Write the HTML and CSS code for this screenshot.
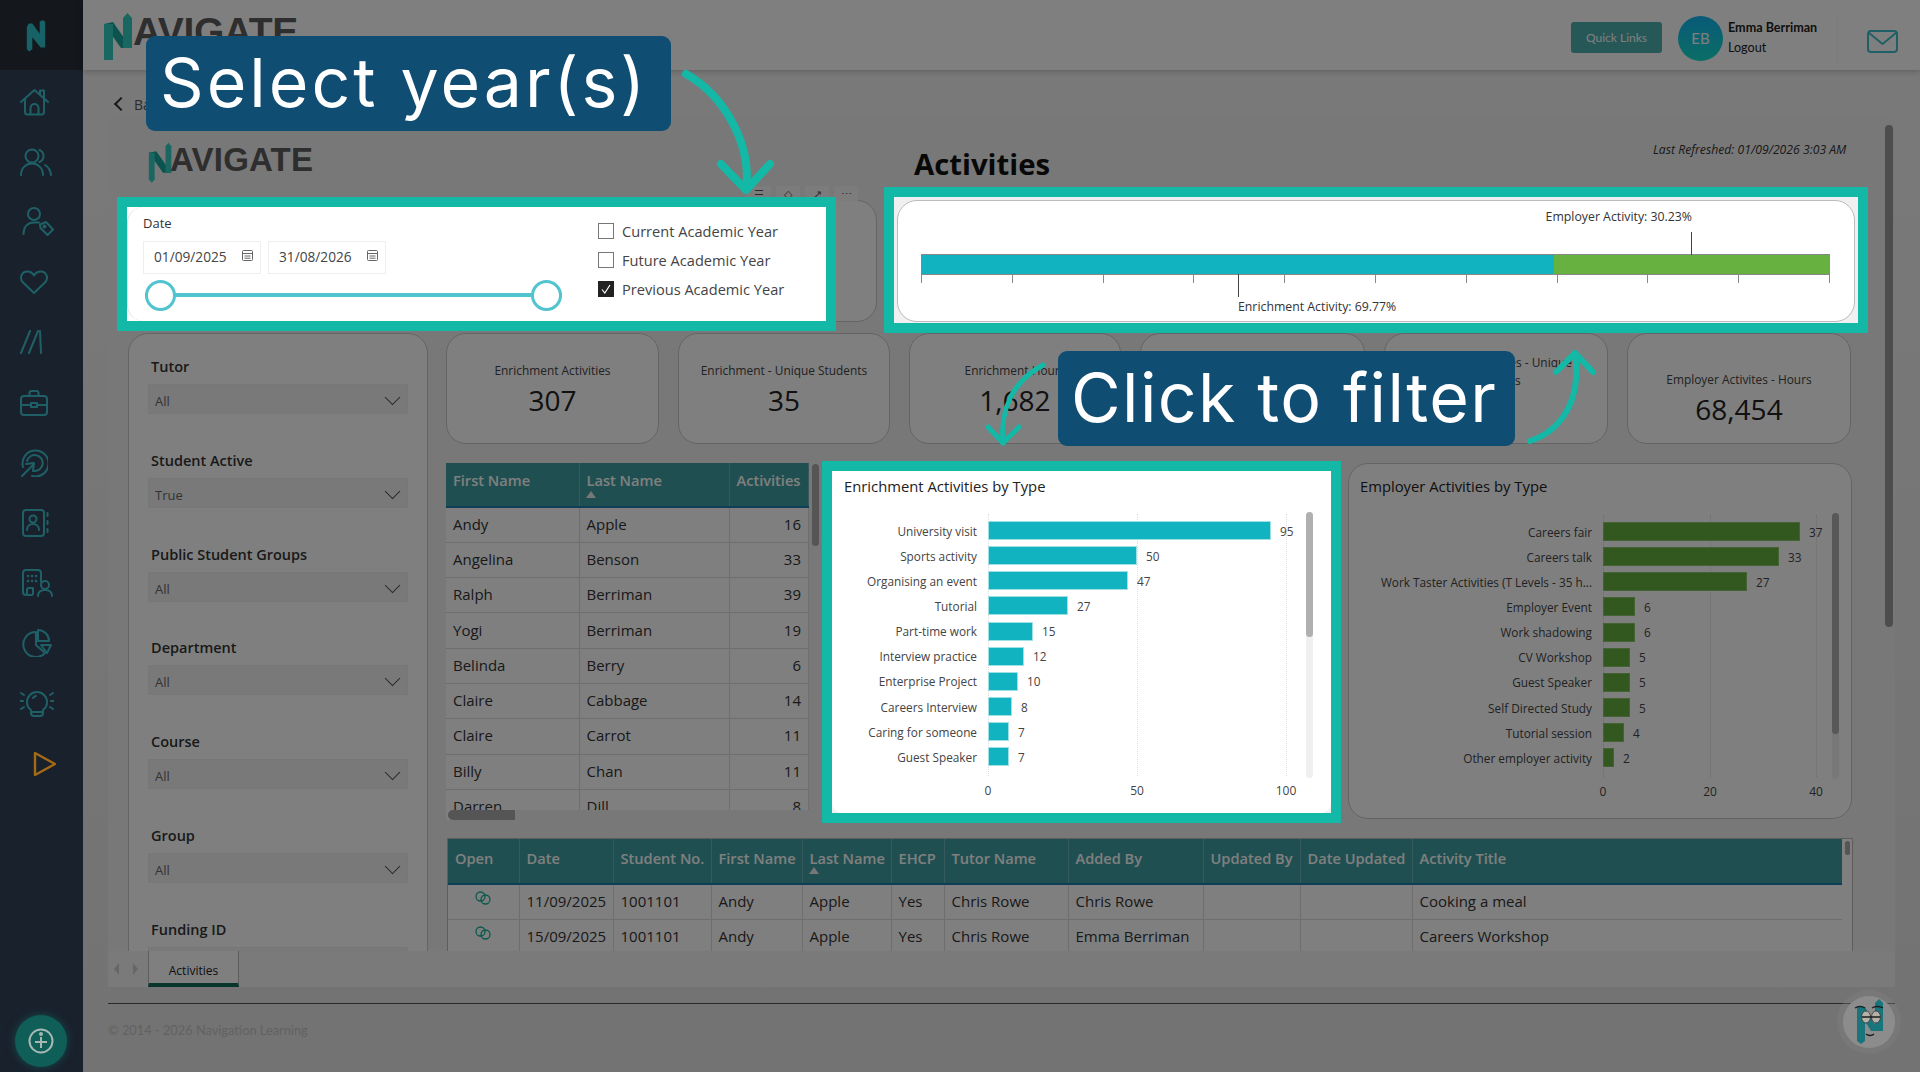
FILE: index.html
```html
<!DOCTYPE html>
<html lang="en">
<head>
    <meta charset="UTF-8" />
    <title>Navigate - Activities</title>
    <link rel="stylesheet" href="styles.css">
</head>
<body>
<aside class="sidebar">
    <div class="side-top">
        <svg class="side-logo" viewBox="0 0 24 36"><path d="M2 9 L2 33 L4.500 35.500 L8 33 L8 20 L17 31 L22 31 L22 3 L19 1 L16 3 L16 16 L8 5 L4 5 Z"/></svg>
    </div>
    <nav class="side-nav">
        <a class="nav-row"><svg width="29" height="28" viewBox="0 0 29 28"><path d="M1 14 14.500 2 28 14M5 11v13a2.500 2.500 0 0 0 2.500 2.500h14a2.500 2.500 0 0 0 2.500-2.500V11M10.500 26v-6a4 4 0 0 1 8 0v6M20 6V2.500h4V10"/></svg></a>
        <a class="nav-row"><svg width="32" height="28" viewBox="0 0 32 28"><circle cx="12" cy="8" r="6.500"/><path d="M1 27c0-7 5-11.500 11-11.500S23 20 23 27M19.500 2a6.500 6.500 0 0 1 0 12M25 17c3.500 2 5.500 5.500 6 10"/></svg></a>
        <a class="nav-row"><svg class="nudge" width="32" height="29" viewBox="0 0 32 29"><circle cx="12" cy="7" r="6"/><path d="M1.500 27c0-7 4-11.500 10.500-11.500h5M18 17.500l6-2.500 7 7.500-5.500 5.500-7-7z"/><circle cx="22.500" cy="19.500" r="1"/></svg></a>
        <a class="nav-row"><svg width="28" height="24" viewBox="0 0 28 24"><path d="M14 23 3 12.500C-1 8 1.500 1.500 7.500 1.500c3 0 5 1.500 6.500 4 1.500-2.500 3.500-4 6.500-4 6 0 8.500 6.500 4.500 11z"/></svg></a>
        <a class="nav-row"><svg width="22" height="24" viewBox="0 0 22 24"><path d="M1 23 10 1M9 23 18 1M20 1l1 22"/></svg></a>
        <a class="nav-row"><svg width="28" height="26" viewBox="0 0 28 26"><rect x="1" y="6" width="26" height="19" rx="3"/><path d="M9.500 6V3a2 2 0 0 1 2-2h5a2 2 0 0 1 2 2v3M1 15h10M17 15h10M11 13h6v4h-6z"/></svg></a>
        <a class="nav-row"><svg width="28" height="28" viewBox="0 0 28 28"><path d="M3 18A13 13 0 1 1 12 27M7 12a8 8 0 1 1 7 10"/><path d="M2 27 13 16M6 15l8-1-1 8"/></svg></a>
        <a class="nav-row"><svg class="nudge" width="27" height="28" viewBox="0 0 27 28"><rect x="1" y="1" width="21" height="26" rx="3"/><circle cx="11" cy="10" r="3.500"/><path d="M5 21c0-4 3-6 6-6s6 2 6 6M25.500 4v3M25.500 12v3M25.500 20v3"/></svg></a>
        <a class="nav-row"><svg class="nudge" width="32" height="29" viewBox="0 0 32 29"><path d="M10 26H4a3 3 0 0 1-3-3V4a3 3 0 0 1 3-3h12a3 3 0 0 1 3 3v9M5 25v-4a2 2 0 0 1 2-2h4v6"/><path d="M6 7h.1M10 7h.1M14 7h.1M6 12h.1M10 12h.1M14 12h.1" stroke-width="2.500"/><circle cx="23" cy="16" r="4"/><path d="M16 27c0-4 3-6 7-6s7 2 7 6"/></svg></a>
        <a class="nav-row"><svg class="nudge" width="30" height="28" viewBox="0 0 30 28"><path d="M14 3a12.500 12.500 0 1 0 9 21l-9-8z"/><path d="M16 1a11 11 0 0 1 11 11H16zM19 16h10l-4 8z"/></svg></a>
        <a class="nav-row"><svg width="34" height="27" viewBox="0 0 34 27"><path d="M11 20c-3-2-4-5-4-8a10 10 0 0 1 20 0c0 3-1 6-4 8v3a3 3 0 0 1-3 3h-6a3 3 0 0 1-3-3zM11 22h12M13 8a5 5 0 0 1 3-2M1 3l3 2M33 3l-3 2M0 11h3M31 11h3M1 19l3-2M33 19l-3-2"/></svg></a>
        <a class="nav-row nav-play"><svg width="24" height="26" viewBox="0 0 24 26"><path d="M2 2l20 11L2 24z"/></svg></a>
    </nav>
    <button class="help-btn" aria-label="Help"><svg width="26" height="26" viewBox="0 0 26 26"><circle cx="13" cy="13" r="11.500"/><path d="M7 14h12M13 9v11"/><circle cx="13" cy="6" r="1"/></svg></button>
</aside>

<div class="main">
    <header class="topbar">
        <div class="brand brand-big">
            <svg viewBox="0 0 30 50"><path class="n-dark" d="M1 14 L18 38 L28 38 L10 12 Z"/><path class="n-teal" d="M1 14 L10 14 L10 56 L5.500 60 L1 56 Z"/><path class="n-teal" d="M20 8 L24.500 3 L29 8 L29 38 L20 38 Z"/></svg>
            <span>AVIGATE</span>
        </div>
        <div class="top-right">
            <a class="quick-links">Quick Links</a>
            <div class="avatar">EB</div>
            <div class="user-info">
                <b>Emma Berriman</b>
                <span>Logout</span>
            </div>
            <svg class="mail-icon" width="31" height="23" viewBox="0 0 31 23"><rect x="1" y="1" width="29" height="21" rx="3"/><path d="M1.500 2.500 15.500 14 29.500 2.500"/></svg>
        </div>
    </header>

    <div class="back-row"><span class="back-chevron"></span>Back</div>

    <div class="report">
        <div class="report-head">
            <div class="brand brand-small">
                <svg viewBox="0 0 30 50"><path class="n-dark" d="M1 14 L18 38 L28 38 L10 12 Z"/><path class="n-teal" d="M1 14 L8 14 L8 46 L4.500 50 L1 46 Z"/><path class="n-teal" d="M21 6 L24.500 2 L28 6 L28 38 L21 38 Z"/></svg>
                <span>AVIGATE</span>
            </div>
            <h1 class="report-title">Activities</h1>
            <div class="refreshed">Last Refreshed: 01/09/2026 3:03 AM</div>
        </div>

        <div class="top-row">
            <div class="card slicer-card">
                <div class="visual-head"><i>&#9776;</i><i>&#9671;</i><i>&#8599;</i><i>&#8943;</i></div>
                <div class="slicer-spot">
                    <div class="slicer-in">
                        <div class="date-side">
                            <div class="date-title">Date</div>
                            <div class="date-inputs">
                                <div class="date-box">01/09/2025<svg class="cal" width="11" height="11" viewBox="0 0 11 11"><rect x=".5" y=".5" width="10" height="10" rx="1"/><path d="M.5 3.500h10M2.500 6h6M2.500 8.200h6"/></svg></div>
                                <div class="date-box">31/08/2026<svg class="cal" width="11" height="11" viewBox="0 0 11 11"><rect x=".5" y=".5" width="10" height="10" rx="1"/><path d="M.5 3.500h10M2.500 6h6M2.500 8.200h6"/></svg></div>
                            </div>
                            <div class="slider"><span class="knob"></span><span class="knob"></span></div>
                        </div>
                        <ul class="year-list">
                            <li><span class="check"></span>Current Academic Year</li>
                            <li><span class="check"></span>Future Academic Year</li>
                            <li><span class="check checked"><svg width="10" height="10" viewBox="0 0 10 10"><path d="M1 5.500 3.800 9 9 1"/></svg></span>Previous Academic Year</li>
                        </ul>
                    </div>
                </div>
            </div>

            <div class="gauge-spot">
                <div class="gauge">
                    <div class="gauge-bar">
                        <div class="seg-enrich"></div>
                        <div class="seg-employer"></div>
                        <div class="callout-up">Employer Activity: 30.23%</div>
                        <div class="callout-down">Enrichment Activity: 69.77%</div>
                    </div>
                    <div class="ticks"><i></i><i></i><i></i><i></i><i></i><i></i><i></i><i></i><i></i><i></i><i></i></div>
                </div>
            </div>
        </div>

        <div class="body-row">
            <section class="card filters">
                <div class="field"><label>Tutor</label><div class="drop">All</div></div>
                <div class="field"><label>Student Active</label><div class="drop">True</div></div>
                <div class="field"><label>Public Student Groups</label><div class="drop">All</div></div>
                <div class="field"><label>Department</label><div class="drop">All</div></div>
                <div class="field"><label>Course</label><div class="drop">All</div></div>
                <div class="field"><label>Group</label><div class="drop">All</div></div>
                <div class="field"><label>Funding ID</label><div class="drop"></div></div>
            </section>

            <div class="right-col">
                <div class="kpi-row">
                    <div class="card kpi"><div class="kpi-label">Enrichment Activities</div><div class="kpi-value">307</div></div>
                    <div class="card kpi"><div class="kpi-label">Enrichment - Unique Students</div><div class="kpi-value">35</div></div>
                    <div class="card kpi"><div class="kpi-label">Enrichment Hours</div><div class="kpi-value">1,682</div></div>
                    <div class="card kpi kpi-low"><div class="kpi-label">Employer Activities</div><div class="kpi-value">146</div></div>
                    <div class="card kpi kpi-two"><div class="kpi-label">Employer Activites - Unique Students</div><div class="kpi-value">28</div></div>
                    <div class="card kpi kpi-low"><div class="kpi-label">Employer Activites - Hours</div><div class="kpi-value">68,454</div></div>
                </div>

                <div class="mid-row">
                    <div class="students-wrap">
                        <table class="grid students">
                            <thead>
                                <tr><th class="c-first">First Name</th><th class="c-last sorted">Last Name</th><th class="c-act">Activities</th></tr>
                            </thead>
                            <tbody>
                                <tr><td>Andy</td><td>Apple</td><td class="num">16</td></tr>
                                <tr><td>Angelina</td><td>Benson</td><td class="num">33</td></tr>
                                <tr><td>Ralph</td><td>Berriman</td><td class="num">39</td></tr>
                                <tr><td>Yogi</td><td>Berriman</td><td class="num">19</td></tr>
                                <tr><td>Belinda</td><td>Berry</td><td class="num">6</td></tr>
                                <tr><td>Claire</td><td>Cabbage</td><td class="num">14</td></tr>
                                <tr><td>Claire</td><td>Carrot</td><td class="num">11</td></tr>
                                <tr><td>Billy</td><td>Chan</td><td class="num">11</td></tr>
                                <tr><td>Darren</td><td>Dill</td><td class="num">8</td></tr>
                            </tbody>
                        </table>
                        <div class="vscroll"></div>
                        <div class="hscroll"></div>
                    </div>

                    <section class="chart-spot">
                        <div class="chart chart-enrich">
                            <h2 class="chart-title">Enrichment Activities by Type</h2>
                            <div class="plot">
                                <div class="hbar"><span class="hlabel">University visit</span><span class="hfill" style="width:283px"></span><span class="hval">95</span></div>
                                <div class="hbar"><span class="hlabel">Sports activity</span><span class="hfill" style="width:149px"></span><span class="hval">50</span></div>
                                <div class="hbar"><span class="hlabel">Organising an event</span><span class="hfill" style="width:140px"></span><span class="hval">47</span></div>
                                <div class="hbar"><span class="hlabel">Tutorial</span><span class="hfill" style="width:80px"></span><span class="hval">27</span></div>
                                <div class="hbar"><span class="hlabel">Part-time work</span><span class="hfill" style="width:45px"></span><span class="hval">15</span></div>
                                <div class="hbar"><span class="hlabel">Interview practice</span><span class="hfill" style="width:36px"></span><span class="hval">12</span></div>
                                <div class="hbar"><span class="hlabel">Enterprise Project</span><span class="hfill" style="width:30px"></span><span class="hval">10</span></div>
                                <div class="hbar"><span class="hlabel">Careers Interview</span><span class="hfill" style="width:24px"></span><span class="hval">8</span></div>
                                <div class="hbar"><span class="hlabel">Caring for someone</span><span class="hfill" style="width:21px"></span><span class="hval">7</span></div>
                                <div class="hbar"><span class="hlabel">Guest Speaker</span><span class="hfill" style="width:21px"></span><span class="hval">7</span></div>
                                <i class="gridline" style="left:0"></i><i class="gridline" style="left:149px"></i><i class="gridline" style="left:298px"></i>
                                <div class="axis"><span style="left:0">0</span><span style="left:149px">50</span><span style="left:298px">100</span></div>
                            </div>
                            <div class="chart-scroll"><span class="thumb-light"></span></div>
                        </div>
                    </section>

                    <section class="card chart chart-employer">
                        <h2 class="chart-title">Employer Activities by Type</h2>
                        <div class="plot">
                            <div class="hbar"><span class="hlabel">Careers fair</span><span class="hfill" style="width:197px"></span><span class="hval">37</span></div>
                            <div class="hbar"><span class="hlabel">Careers talk</span><span class="hfill" style="width:176px"></span><span class="hval">33</span></div>
                            <div class="hbar"><span class="hlabel">Work Taster Activities (T Levels - 35 h...</span><span class="hfill" style="width:144px"></span><span class="hval">27</span></div>
                            <div class="hbar"><span class="hlabel">Employer Event</span><span class="hfill" style="width:32px"></span><span class="hval">6</span></div>
                            <div class="hbar"><span class="hlabel">Work shadowing</span><span class="hfill" style="width:32px"></span><span class="hval">6</span></div>
                            <div class="hbar"><span class="hlabel">CV Workshop</span><span class="hfill" style="width:27px"></span><span class="hval">5</span></div>
                            <div class="hbar"><span class="hlabel">Guest Speaker</span><span class="hfill" style="width:27px"></span><span class="hval">5</span></div>
                            <div class="hbar"><span class="hlabel">Self Directed Study</span><span class="hfill" style="width:27px"></span><span class="hval">5</span></div>
                            <div class="hbar"><span class="hlabel">Tutorial session</span><span class="hfill" style="width:21px"></span><span class="hval">4</span></div>
                            <div class="hbar"><span class="hlabel">Other employer activity</span><span class="hfill" style="width:11px"></span><span class="hval">2</span></div>
                            <i class="gridline" style="left:0"></i><i class="gridline" style="left:107px"></i><i class="gridline" style="left:213px"></i>
                            <div class="axis"><span style="left:0">0</span><span style="left:107px">20</span><span style="left:213px">40</span></div>
                        </div>
                        <div class="chart-scroll"><span class="thumb-dark"></span></div>
                    </section>
                </div>

                <div class="detail-wrap">
                    <table class="grid detail">
                        <thead>
                            <tr>
                                <th style="width:71px">Open</th>
                                <th style="width:94px">Date</th>
                                <th style="width:98px">Student No.</th>
                                <th style="width:91px">First Name</th>
                                <th class="sorted" style="width:89px">Last Name</th>
                                <th style="width:53px">EHCP</th>
                                <th style="width:124px">Tutor Name</th>
                                <th style="width:135px">Added By</th>
                                <th style="width:97px">Updated By</th>
                                <th style="width:112px">Date Updated</th>
                                <th>Activity Title</th>
                            </tr>
                        </thead>
                        <tbody>
                            <tr>
                                <td class="open"><svg width="18" height="14" viewBox="0 0 18 14"><circle cx="6.500" cy="5.500" r="4.500"/><circle cx="11.500" cy="8.500" r="4.500"/></svg></td>
                                <td>11/09/2025</td><td>1001101</td><td>Andy</td><td>Apple</td><td>Yes</td><td>Chris Rowe</td><td>Chris Rowe</td><td></td><td></td><td>Cooking a meal</td>
                            </tr>
                            <tr>
                                <td class="open"><svg width="18" height="14" viewBox="0 0 18 14"><circle cx="6.500" cy="5.500" r="4.500"/><circle cx="11.500" cy="8.500" r="4.500"/></svg></td>
                                <td>15/09/2025</td><td>1001101</td><td>Andy</td><td>Apple</td><td>Yes</td><td>Chris Rowe</td><td>Emma Berriman</td><td></td><td></td><td>Careers Workshop</td>
                            </tr>
                        </tbody>
                    </table>
                    <div class="detail-thumb"></div>
                </div>
            </div>
        </div>
        <div class="report-scroll"></div>
    </div>

    <div class="tabs">
        <div class="tab-arrows"><i class="arrow-l"></i><i class="arrow-r"></i></div>
        <div class="tab">Activities</div>
    </div>

    <footer class="footer">&copy; 2014 - 2026 Navigation Learning</footer>
</div>

<div class="dim"></div>

<div class="tour">
    <div class="tour-label label-year">Select year(s)</div>
    <div class="tour-label label-filter">Click to filter</div>
    <svg class="tour-arrows" width="1920" height="1072" viewBox="0 0 1920 1072">
        <path class="a-big" d="M686 74C725 96 752 145 746 190M721 164 746 190 770 164"/>
        <path class="a-small" d="M1043 365C1012 382 1000 410 1003 443M988 427 1003 443 1019 427"/>
        <path class="a-mid" d="M1530 441C1560 431 1582 402 1575 353M1556 372 1575 353 1593 372"/>
    </svg>
</div>

<div class="helper">
    <svg width="36" height="46" viewBox="0 0 36 46">
        <path class="helper-p" d="M6 8h8v34l-4 3-4-3zM14 8l10 18V4l4-4 4 4v28H20L14 22z"/>
        <ellipse class="helper-eye" cx="15" cy="18" rx="4.500" ry="6"/><ellipse class="helper-eye" cx="25" cy="18" rx="4.500" ry="6"/>
        <path class="helper-line" d="M4 9c3-2 7-2 10 0M21 9c3-2 8-2 11 0M11 18h18M15 35c2 2 6 2 8 0"/>
    </svg>
</div>
</body>
</html>
```
FILE: styles.css
```css
* {
    margin: 0;
    padding: 0;
    box-sizing: border-box;
}
html, body {
    height: 100%;
    overflow: hidden;
}
body {
    display: flex;
    font-family: "Open Sans", "Liberation Sans", sans-serif;
    color: #333;
    background: #eee;
}
svg {
    display: block;
}

/* sidebar */
.sidebar {
    width: 83px;
    flex: none;
    height: 1072px;
    background: #32425a;
}
.side-top {
    height: 70px;
    background: #28303a;
    padding: 18px 0 0 25px;
}
.side-logo {
    width: 22px;
    height: 35px;
    fill: #2cc4cc;
}
.side-nav {
    display: grid;
    grid-auto-rows: 60.2px;
    padding-top: 1.5px;
}
.nav-row {
    display: flex;
    align-items: center;
    padding-left: 20px;
}
.nav-row svg {
    fill: none;
    stroke: #3ec0cc;
    stroke-width: 2;
    stroke-linecap: round;
    stroke-linejoin: round;
}
.nav-row svg.nudge {
    margin-left: 2px;
}
.nav-play {
    padding-left: 33px;
    position: relative;
    z-index: 25;
}
.nav-play svg {
    stroke: #a66a14;
    stroke-width: 2.4;
}
.help-btn {
    position: absolute;
    left: 15px;
    top: 1015px;
    width: 52px;
    height: 52px;
    z-index: 25;
    border: 0;
    border-radius: 50%;
    background: #0f5e57;
    box-shadow: 0 0 10px rgba(20, 120, 110, .5);
    display: flex;
    align-items: center;
    justify-content: center;
}
.help-btn svg {
    fill: none;
    stroke: #a5b8b4;
    stroke-width: 2;
}

/* top bar */
.main {
    flex: 1;
    min-width: 0;
    display: flex;
    flex-direction: column;
    height: 1072px;
    background: linear-gradient(#f4f4f4, #e6e6e6);
}
.topbar {
    height: 70px;
    flex: none;
    background: #fff;
    box-shadow: 0 1px 6px rgba(0, 0, 0, .25);
    display: flex;
    align-items: flex-start;
    justify-content: space-between;
    padding-left: 20px;
    font-family: Lato, "Open Sans", sans-serif;
}
.brand {
    display: flex;
    align-items: flex-start;
    font-family: "Liberation Sans", sans-serif;
    font-weight: bold;
    color: #5c5c5c;
}
.n-teal {
    fill: #35cfc4;
}
.n-dark {
    fill: #17a79d;
}
.brand-big {
    padding-top: 10px;
}
.brand-big svg {
    width: 30px;
    height: 50px;
    overflow: hidden;
}
.brand-big span {
    font-size: 39px;
    letter-spacing: -.4px;
    line-height: 34px;
    margin-top: 5px;
}
.brand-small {
    width: 806px;
    padding: 23px 0 0 40px;
}
.brand-small svg {
    width: 25px;
    height: 42px;
}
.brand-small span {
    font-size: 33px;
    letter-spacing: .2px;
    line-height: 30px;
    margin: 4px 0 0 -3px;
}
.top-right {
    display: flex;
    align-items: center;
    height: 60px;
}
.quick-links {
    width: 91px;
    height: 31px;
    margin-top: 15px;
    border-radius: 3px;
    background: #4fb0b0;
    color: #fff;
    font-size: 12px;
    display: flex;
    align-items: center;
    justify-content: center;
}
.avatar {
    width: 45px;
    height: 45px;
    margin: 16px 0 0 16px;
    border-radius: 50%;
    background: linear-gradient(#12b4f0, #16dccb);
    color: #fff;
    font-size: 15px;
    display: flex;
    align-items: center;
    justify-content: center;
}
.user-info {
    width: 110px;
    margin: 16px 0 0 5px;
    font-size: 12.6px;
    line-height: 20px;
    color: #222;
    border-right: 1px solid #f6f6f6;
    height: 50px;
    padding-top: 5px;
}
.user-info b,
.user-info span {
    display: block;
}
.mail-icon {
    margin: 22px 22px 0 29px;
    fill: none;
    stroke: #3ec0cc;
    stroke-width: 2;
    stroke-linejoin: round;
}
.back-row {
    height: 48px;
    flex: none;
    padding: 20px 0 0 33px;
    font-size: 14px;
    color: #555;
    display: flex;
    align-items: center;
    gap: 8px;
}
.back-chevron {
    width: 10px;
    height: 10px;
    border-left: 2px solid #333;
    border-bottom: 2px solid #333;
    transform: rotate(45deg);
}

/* report canvas */
.report {
    position: relative;
    height: 833px;
    flex: none;
    margin: 0 25px;
    overflow: hidden;
    background: #f0f0f0;
}
.report-head {
    height: 82px;
    display: flex;
}
.report-title {
    font-size: 29.3px;
    font-weight: bold;
    color: #111;
    line-height: 40px;
    margin-top: 26px;
    width: 739px;
}
.refreshed {
    font-size: 12.2px;
    font-style: italic;
    color: #333;
    margin-top: 23px;
    white-space: nowrap;
}
.card {
    background: #fff;
    border: 1px solid #c8c8c8;
    border-radius: 20px;
}
.top-row {
    display: grid;
    grid-template-columns: 749px 957px;
    column-gap: 20px;
    margin-left: 20px;
    height: 133px;
}
.slicer-card {
    position: relative;
    height: 122px;
}
.visual-head {
    position: absolute;
    left: 618px;
    top: -15px;
    display: flex;
    gap: 5px;
}
.visual-head i {
    width: 24px;
    height: 15px;
    background: #f8f8f8;
    font-style: normal;
    font-size: 11px;
    line-height: 15px;
    text-align: center;
    color: #555;
}
.slicer-spot {
    position: absolute;
    left: -12px;
    top: -4px;
    width: 719px;
    height: 134px;
    z-index: 20;
    background: #fff;
    border: 10px solid #14b8a6;
}
.slicer-in {
    height: 100%;
    border-left: 1px solid #ddd;
    border-radius: 16px 0 0 16px;
    display: flex;
    padding-left: 15px;
}
.date-side {
    width: 455px;
}
.date-title {
    font-size: 13px;
    line-height: 18px;
    margin-top: 7px;
}
.date-inputs {
    display: flex;
    gap: 7px;
    margin-top: 9px;
}
.date-box {
    width: 118px;
    height: 33px;
    border: 1px solid #eee;
    font-size: 13.7px;
    color: #444;
    display: flex;
    align-items: center;
    justify-content: space-between;
    padding: 0 7px 3px 10px;
}
.cal {
    fill: none;
    stroke: #666;
    stroke-width: 1;
    margin-top: -2px;
}
.slider {
    position: relative;
    display: flex;
    justify-content: space-between;
    align-items: center;
    width: 417px;
    height: 30px;
    margin: 6px 0 0 2px;
    background: linear-gradient(#52c4cf, #52c4cf) center / 100% 4px no-repeat;
}
.knob {
    width: 31px;
    height: 31px;
    border-radius: 50%;
    background: #fff;
    border: 3px solid #52c4cf;
}
.year-list {
    list-style: none;
    padding-top: 9px;
}
.year-list li {
    height: 29px;
    display: flex;
    align-items: center;
    gap: 8px;
    font-size: 14.6px;
    color: #444;
    white-space: nowrap;
}
.check {
    width: 16px;
    height: 16px;
    border: 1px solid #777;
    display: flex;
    align-items: center;
    justify-content: center;
}
.checked {
    background: #222;
    border-color: #222;
}
.checked svg {
    fill: none;
    stroke: #fff;
    stroke-width: 1.200;
}

/* gauge */
.gauge-spot {
    position: relative;
    z-index: 20;
    height: 146px;
    margin: -13px -14px 0 -13px;
    border: 10px solid #14b8a6;
    background: #f0f0f0;
    padding: 3px;
}
.gauge {
    height: 122px;
    background: #fff;
    border: 1px solid #bbb;
    border-radius: 20px;
    padding: 53px 24px 0 23px;
}
.gauge-bar {
    position: relative;
    height: 21px;
    border: solid #888;
    border-width: 1px 0;
    display: flex;
}
.seg-enrich {
    width: 69.6%;
    background: #10b3bf;
}
.seg-employer {
    flex: 1;
    background: #66b13f;
}
.callout-up,
.callout-down {
    position: absolute;
    font-size: 12.3px;
    white-space: nowrap;
    color: #333;
    line-height: 16px;
}
.callout-up {
    right: 138px;
    bottom: 100%;
    padding-bottom: 30px;
}
.callout-up::after {
    content: "";
    position: absolute;
    right: 0;
    bottom: 0;
    width: 1px;
    height: 23px;
    background: #444;
}
.callout-down {
    left: 317px;
    top: 100%;
    padding-top: 25px;
}
.callout-down::before {
    content: "";
    position: absolute;
    left: 0;
    top: 0;
    width: 1px;
    height: 23px;
    background: #444;
}
.ticks {
    display: flex;
    justify-content: space-between;
    height: 8px;
}
.ticks i {
    width: 1px;
    background: #888;
}

/* filters */
.body-row {
    display: flex;
    gap: 19px;
    margin-left: 20px;
}
.filters {
    width: 300px;
    height: 700px;
    flex: none;
    padding: 23px 19px 0 19px;
    margin-right: -1px;
}
.field {
    height: 93.800px;
}
.field label {
    display: block;
    font-size: 14.5px;
    font-weight: 600;
    line-height: 20px;
    color: #333;
    margin: 0 0 7px 3px;
}
.drop {
    position: relative;
    height: 30px;
    background: #f3f3f3;
    border: 1px solid #eee;
    font-size: 13px;
    line-height: 32px;
    padding-left: 6px;
    color: #666;
}
.drop::after {
    content: "";
    position: absolute;
    right: 9px;
    top: 7px;
    width: 10px;
    height: 10px;
    border-right: 1px solid #555;
    border-bottom: 1px solid #555;
    transform: rotate(45deg);
}

/* kpis */
.right-col {
    width: 1407px;
    flex: none;
}
.kpi-row {
    display: grid;
    grid-template-columns: 213px 212px 212px 225px 224px 224px;
    column-gap: 19px;
    height: 111px;
}
.kpi {
    text-align: center;
    padding-top: 27px;
}
.kpi-low {
    padding-top: 36px;
}
.kpi-two {
    padding: 19px 30px 0;
}
.kpi-label {
    font-size: 11.9px;
    line-height: 18px;
    color: #444;
}
.kpi-value {
    font-size: 28px;
    line-height: 40px;
    color: #222;
    margin-top: 1px;
}

/* tables */
.mid-row {
    display: grid;
    grid-template-columns: 374px 519px 509px;
    column-gap: 2px;
    margin-top: 19px;
    height: 355px;
}
.students-wrap {
    position: relative;
    height: 357px;
    overflow: hidden;
}
.grid {
    border-collapse: collapse;
    table-layout: fixed;
    font-size: 15px;
    color: #333;
}
.grid th {
    height: 44px;
    background: #3f9fa2;
    color: #fff;
    font-size: 14.6px;
    font-weight: 600;
    text-align: left;
    vertical-align: top;
    padding: 7px 7px 0;
    border-right: 1px solid #6cb4b8;
    border-bottom: 2px solid #1e7db0;
    white-space: nowrap;
}
.grid td {
    height: 35.300px;
    padding: 0 7px 2px;
    background: #fff;
    border-right: 1px solid #ddd;
    border-bottom: 1px solid #ddd;
    white-space: nowrap;
}
.grid .num {
    text-align: right;
}
.sorted {
    position: relative;
}
.sorted::after {
    content: "";
    position: absolute;
    left: 6px;
    top: 28px;
    border: 5px solid transparent;
    border-top: 0;
    border-bottom: 7px solid #eee;
}
.students {
    width: 363px;
}
.c-first {
    width: 133px;
}
.c-last {
    width: 150px;
}
.students tbody tr:last-child td {
    border-bottom: 0;
}
.vscroll {
    position: absolute;
    left: 366px;
    top: 1px;
    width: 7px;
    height: 82px;
    background: #aaa;
    border-radius: 4px;
}
.hscroll {
    position: absolute;
    left: 2px;
    top: 347px;
    right: 0;
    height: 10px;
    background: linear-gradient(90deg, #aaa 67px, #f0f0f0 67px);
    border-radius: 5px 0 0 5px;
}
.detail-wrap {
    position: relative;
    margin: 20px 0 0 1px;
    width: 1406px;
    height: 200px;
    border: 1px solid #bbb;
    border-bottom: 0;
    padding-right: 11px;
    background: #fff;
}
.detail {
    width: 1394px;
}
.detail th {
    height: 45px;
    padding-top: 9px;
}
.detail td:last-child,
.detail th:last-child {
    border-right: 0;
}
.open svg {
    margin: -5px auto 0;
    fill: none;
    stroke: #17b29c;
    stroke-width: 1.300;
}
.detail-thumb {
    position: absolute;
    right: 2px;
    top: 2px;
    width: 5px;
    height: 14px;
    border-radius: 3px;
    background: #aaa;
}

/* charts */
.chart-spot {
    position: relative;
    z-index: 20;
    height: 362px;
    margin-top: -2px;
    border: 10px solid #14b8a6;
    background: #f0f0f0;
}
.chart {
    position: relative;
    background: #fff;
}
.chart-enrich {
    height: 342px;
    padding-left: 12px;
    border-radius: 0 0 10px 10px;
}
.chart-employer {
    height: 356px;
    margin-left: 5px;
    padding-left: 11px;
}
.chart-title {
    font-size: 14.8px;
    font-weight: 400;
    color: #222;
    line-height: 20px;
    padding-top: 5px;
    height: 47px;
    white-space: nowrap;
}
.chart-employer .chart-title {
    padding-top: 12px;
    height: 55px;
}
.plot {
    position: relative;
    --label-w: 133px;
}
.chart-employer .plot {
    --label-w: 232px;
}
.hbar {
    position: relative;
    z-index: 1;
    display: flex;
    align-items: center;
    height: 25.150px;
    font-size: 11.8px;
    color: #444;
}
.hlabel {
    width: var(--label-w);
    margin-right: 11px;
    text-align: right;
    white-space: nowrap;
    flex: none;
}
.hfill {
    height: 19px;
    background: #10b3bf;
    border: 1px solid #9fe0e5;
    flex: none;
}
.chart-employer .hfill {
    background: #66b13f;
    border-color: #8ac56a;
}
.hval {
    margin-left: 9px;
}
.gridline {
    position: absolute;
    top: -4px;
    height: 262px;
    margin-left: calc(var(--label-w) + 11px);
    border-left: 1px dotted #ddd;
}
.axis {
    position: relative;
    height: 22px;
    margin-top: 13px;
    margin-left: calc(var(--label-w) + 11px);
    font-size: 12px;
    color: #444;
}
.axis span {
    position: absolute;
    transform: translateX(-50%);
}
.chart-scroll {
    position: absolute;
    top: 41px;
    left: 474px;
    width: 7px;
    height: 266px;
    border-radius: 4px;
    background: #f0f0f0;
}
.chart-employer .chart-scroll {
    top: 49px;
    left: 483px;
}
.thumb-light,
.thumb-dark {
    display: block;
    border-radius: 4px;
    background: #b0b0b0;
    height: 125px;
}
.thumb-dark {
    height: 221px;
}

.report-scroll {
    position: absolute;
    left: 1777px;
    top: 7px;
    width: 8px;
    height: 502px;
    border-radius: 4px;
    background: #9a9a9a;
}

/* tabs and footer */
.tabs {
    height: 36px;
    flex: none;
    margin: 0 25px;
    background: #f5f5f5;
    display: flex;
}
.tab-arrows {
    width: 40px;
    display: flex;
    align-items: center;
    gap: 14px;
    padding-left: 6px;
}
.tab-arrows i {
    border: 5px solid transparent;
    border-top-width: 6px;
    border-bottom-width: 6px;
}
.arrow-l {
    border-right-color: #ccc !important;
    margin-left: -5px;
}
.arrow-r {
    border-left-color: #ccc !important;
    margin-right: -5px;
}
.tab {
    width: 91px;
    background: #fff;
    border: solid #bbb;
    border-width: 0 1px;
    border-bottom: 4px solid #106a58;
    font-size: 12px;
    color: #222;
    text-align: center;
    line-height: 40px;
}
.footer {
    flex: none;
    margin: 16px 25px 0;
    border-top: 1px solid #555;
    padding-top: 18px;
    font-family: Lato, "Open Sans", sans-serif;
    font-size: 12.8px;
    color: #c4c4c4;
}

/* tutorial overlay */
.dim {
    position: fixed;
    inset: 0;
    z-index: 10;
    background: rgba(0, 0, 0, .5);
}
.tour {
    position: fixed;
    inset: 0;
    z-index: 30;
    pointer-events: none;
}
.tour-label {
    position: absolute;
    height: 95px;
    border-radius: 9px;
    background: #0f4d72;
    color: #fff;
    font-family: Inter, "Open Sans", sans-serif;
    font-size: 68px;
    line-height: 92px;
    white-space: nowrap;
}
.label-year {
    left: 146px;
    top: 36px;
    width: 525px;
    padding-left: 14px;
    letter-spacing: 3px;
}
.label-filter {
    left: 1058px;
    top: 351px;
    width: 457px;
    padding-left: 13px;
    letter-spacing: 1.4px;
}
.tour-arrows {
    position: absolute;
    left: 0;
    top: 0;
    fill: none;
    stroke: #14b8a6;
    stroke-linecap: round;
    stroke-linejoin: round;
}
.a-big {
    stroke-width: 8;
}
.a-small {
    stroke-width: 5;
}
.a-mid {
    stroke-width: 6;
}
.helper {
    position: fixed;
    left: 1843px;
    top: 996px;
    width: 52px;
    height: 52px;
    z-index: 25;
    border-radius: 50%;
    background: #8c8c8c;
    box-shadow: 0 0 0 6px rgba(130, 130, 130, .35);
    display: flex;
    align-items: center;
    justify-content: center;
}
.helper-p {
    fill: #17757b;
}
.helper-eye {
    fill: #b5b0a8;
    stroke: #333;
    stroke-width: .8;
}
.helper-line {
    fill: none;
    stroke: #1c1c1c;
    stroke-width: 1.300;
}
```
